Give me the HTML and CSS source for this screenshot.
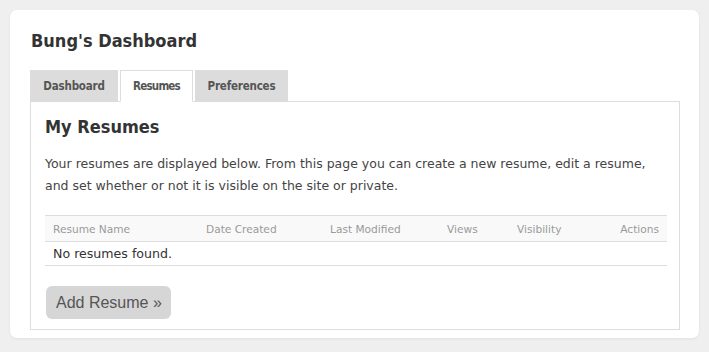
FILE: index.html
```html
<!DOCTYPE html>
<html lang="en">
<head>
  <meta charset="UTF-8">
  <title>Bung's Dashboard</title>
  <link rel="stylesheet" href="styles.css">
</head>
<body>
  <div class="card">
    <h1>Bung's Dashboard</h1>

    <ul class="tabs">
      <li class="tab-dash">Dashboard</li>
      <li class="tab-res active">Resumes</li>
      <li class="tab-pref">Preferences</li>
    </ul>

    <div class="panel">
      <h2>My Resumes</h2>
      <p>Your resumes are displayed below. From this page you can create a new resume, edit a resume, and set whether or not it is visible on the site or private.</p>

      <table class="resumes">
        <thead>
          <tr>
            <th class="c-name">Resume Name</th>
            <th class="c-date">Date Created</th>
            <th class="c-mod">Last Modified</th>
            <th class="c-views">Views</th>
            <th class="c-vis">Visibility</th>
            <th class="c-act">Actions</th>
          </tr>
        </thead>
        <tbody>
          <tr>
            <td colspan="6">No resumes found.</td>
          </tr>
        </tbody>
      </table>

      <a class="button" href="#">Add Resume &raquo;</a>
    </div>
  </div>
</body>
</html>
```

FILE: styles.css
```css
body {
  margin: 0;
  padding: 10px;
  background: #efefef;
  font-family: "DejaVu Sans", sans-serif;
  color: #444;
}

.card {
  width: 689px;
  box-sizing: border-box;
  background: white;
  border-radius: 7px;
  box-shadow: 0 1px 3px rgba(0, 0, 0, 0.06);
  padding: 20px 19px 8px 20px;
}

h1,
h2,
.tabs li {
  font-family: "DejaVu Sans Condensed", "DejaVu Sans", sans-serif;
}

h1 {
  margin: 0 0 18px 1px;
  font-size: 18px;
  line-height: 22px;
  color: #333;
}

.tabs {
  list-style: none;
  margin: 0;
  padding: 0;
  display: flex;
  gap: 2px;
}

.tabs li {
  box-sizing: border-box;
  background: #dcdcdc;
  color: #555;
  font-size: 11.5px;
  font-weight: bold;
  text-align: center;
  height: 32px;
  line-height: 32px;
  margin-bottom: -1px;
  letter-spacing: -0.2px;
}

.tabs .tab-dash { width: 88px; }
.tabs .tab-res { width: 73px; letter-spacing: -0.8px; }
.tabs .tab-pref { width: 93px; }

.tabs li.active {
  background: white;
  border: 1px solid #ddd;
  border-bottom: 1px solid white;
  line-height: 30px;
  position: relative;
}

.panel {
  border: 1px solid #ddd;
  padding: 14px 13px 10px 14px;
}

h2 {
  margin: 0 0 15px;
  font-size: 18px;
  line-height: 22px;
  color: #333;
}

.panel p {
  margin: 0 0 18px;
  font-size: 12.5px;
  line-height: 22px;
  color: #444;
}

.resumes {
  width: 622px;
  border-collapse: collapse;
  font-size: 10.6px;
  margin-bottom: 20px;
}

.resumes th {
  background: #f9f9f9;
  color: #999;
  font-weight: normal;
  text-align: left;
  height: 25px;
  padding: 0 0 0 8px;
  border-top: 1px solid #ddd;
  border-bottom: 1px solid #ddd;
}

.resumes .c-name { width: 145px; }
.resumes .c-date { width: 116px; }
.resumes .c-mod { width: 109px; }
.resumes .c-views { width: 62px; }
.resumes .c-vis { width: 80px; }
.resumes .c-act { text-align: right; padding-right: 8px; }

.resumes td {
  font-size: 12.6px;
  color: #333;
  height: 23px;
  padding: 0 0 0 8px;
  border-bottom: 1px solid #ddd;
}

.button {
  display: inline-block;
  margin-left: 1px;
  background: #d6d6d6;
  color: #555;
  font-family: "Liberation Sans", Arial, sans-serif;
  font-size: 16px;
  line-height: 33px;
  padding: 0 9px 0 10px;
  border-radius: 6px;
  text-decoration: none;
}
```
